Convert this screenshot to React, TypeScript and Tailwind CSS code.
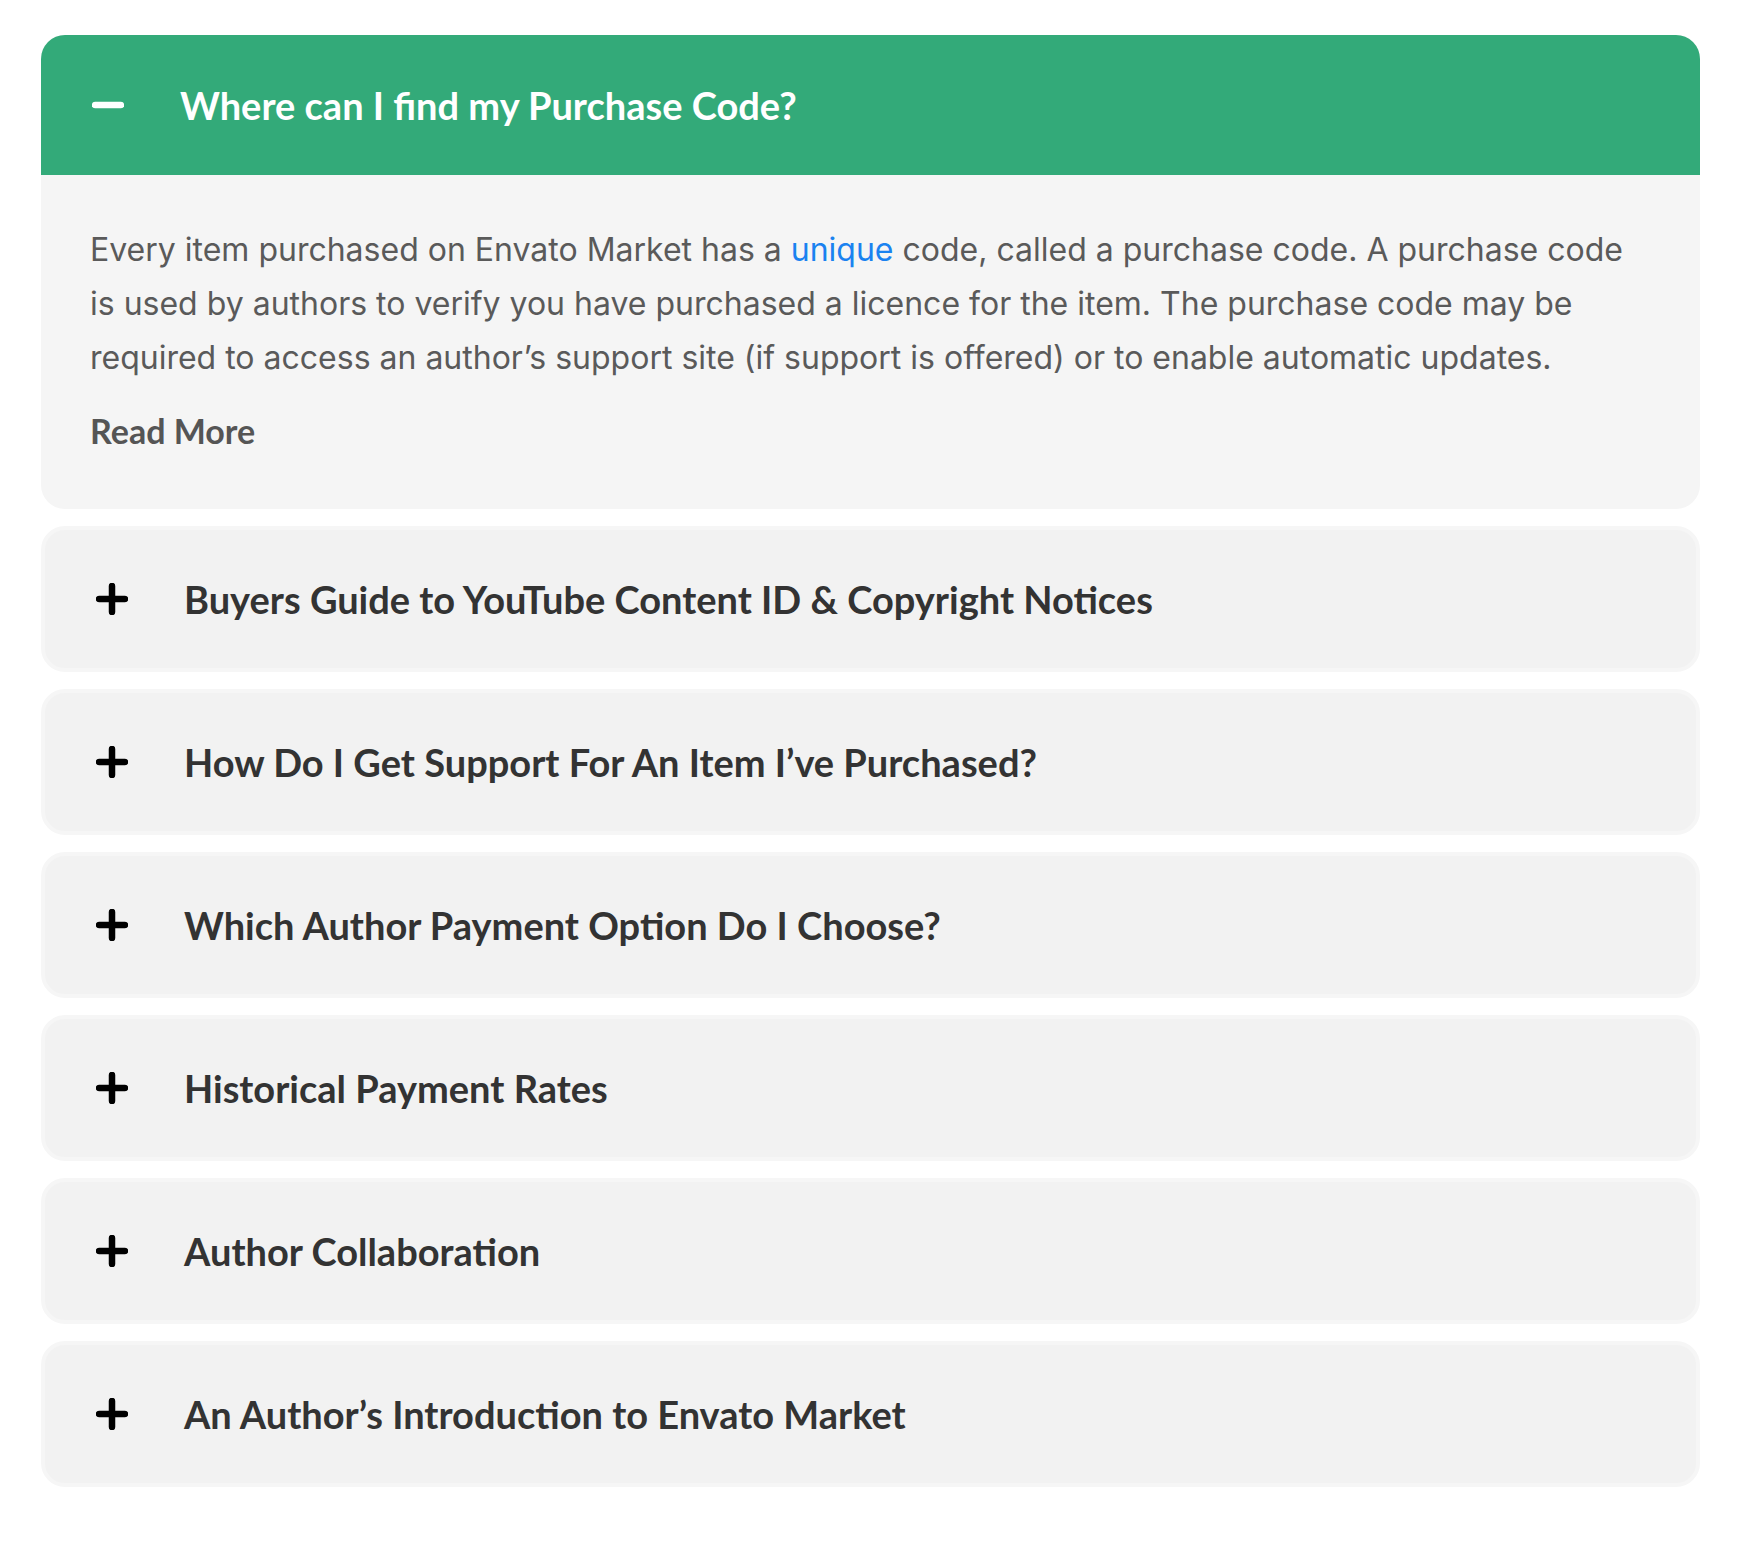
import React from 'react';

const faqs: string[] = [
  'Buyers Guide to YouTube Content ID & Copyright Notices',
  'How Do I Get Support For An Item I’ve Purchased?',
  'Which Author Payment Option Do I Choose?',
  'Historical Payment Rates',
  'Author Collaboration',
  'An Author’s Introduction to Envato Market',
];

const PlusIcon = () => (
  <svg width="32" height="32" viewBox="0 0 32 32" className="shrink-0">
    <path d="M16 3v26M3 16h26" stroke="#000" strokeWidth="6.5" strokeLinecap="round" />
  </svg>
);

const MinusIcon = () => (
  <svg width="32" height="32" viewBox="0 0 32 32" className="shrink-0">
    <path d="M3 16h26" stroke="#fff" strokeWidth="6.5" strokeLinecap="round" />
  </svg>
);

export default function App() {
  return (
    <div className="min-h-[1548px] w-full bg-white pt-[35px] pl-[41px]">
      <div className="flex w-[1659px] flex-col gap-[17px]">
        <div className="overflow-hidden rounded-[24px] bg-[#f5f5f5]">
          <div className="flex h-[140px] items-center gap-[56px] bg-[#33aa79] pl-[51px]">
            <MinusIcon />
            <h3 className="font-['Lato',sans-serif] text-[38px] font-bold text-white">
              Where can I find my Purchase Code?
            </h3>
          </div>
          <div className="px-[49px] pt-[48px] pb-[60px]">
            <p className="mb-[28px] font-['Inter',sans-serif] text-[32px] leading-[54px] text-[#5a5a5a]">
              Every item purchased on Envato Market has a{' '}
              <a href="#" className="text-[#1a82f0]">unique</a> code, called a purchase code. A purchase code
              is used by authors to verify you have purchased a licence for the item. The purchase code may be
              required to access an author’s support site (if support is offered) or to enable automatic updates.
            </p>
            <a href="#" className="block font-['Lato',sans-serif] text-[34px] leading-[36px] font-bold text-[#555]">
              Read More
            </a>
          </div>
        </div>

        {faqs.map((q, i) => (
          <div
            key={i}
            className="flex h-[146px] items-center gap-[56px] rounded-[24px] border-[4px] border-[#f6f6f6] bg-[#f2f2f2] pl-[51px]"
          >
            <PlusIcon />
            <h3 className="font-['Lato',sans-serif] text-[38px] font-bold text-[#333]">{q}</h3>
          </div>
        ))}
      </div>
    </div>
  );
}
